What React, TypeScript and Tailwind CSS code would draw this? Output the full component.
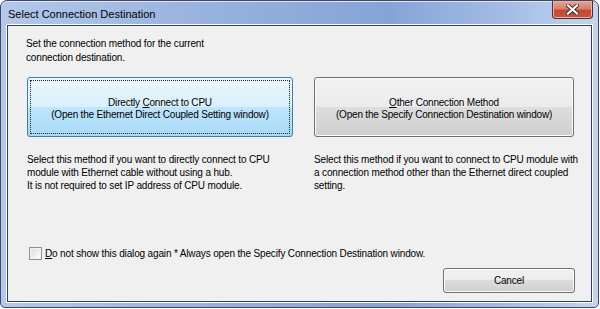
import React, { useState } from "react";

const font = "font-['Segoe_UI','Liberation_Sans',Arial,sans-serif]";

const BigButton: React.FC<{
  focused?: boolean;
  pre: string;
  accessKey: string;
  rest: string;
  sub: string;
  width: string;
}> = ({ focused, pre, accessKey, rest, sub, width }) => (
  <button
    type="button"
    className={`${width} h-[60px] rounded-[3px] border p-[2px] text-[10px] leading-[12px] tracking-[-0.2px] text-black ${
      focused
        ? "border-[#3c7fb1] bg-[linear-gradient(180deg,#eaf6fd_0%,#d9f0fc_50%,#bee6fd_50%,#a7d9f5_100%)]"
        : "border-[#707070] bg-[linear-gradient(180deg,#f2f2f2_0%,#ebebeb_50%,#dddddd_50%,#cfcfcf_100%)] shadow-[inset_0_0_0_1px_#fcfcfc]"
    }`}
  >
    <div
      className={`flex h-full w-full flex-col items-center justify-center pt-[3px] ${
        focused ? "border border-dotted border-[#222]" : ""
      }`}
    >
      <span>
        {pre}
        <span className="underline">{accessKey}</span>
        {rest}
      </span>
      <span>{sub}</span>
    </div>
  </button>
);

const App: React.FC = () => {
  const [noShow, setNoShow] = useState(false);

  return (
    <div className={`h-[309px] w-[600px] bg-white ${font}`}>
      <div className="flex h-[308px] w-[599px] flex-col rounded-t-[7px] rounded-b-[5px] border border-[#3b4963] bg-[linear-gradient(90deg,#b3c8ea_0%,#9bb4e0_30%,#86a3d8_65%,#a5bde6_85%,#c3d4ee_100%)] px-[6px] pb-[5px] shadow-[inset_0_1px_0_#dfe8f6]">
        <div className="flex h-[24px] items-start justify-between">
          <span className="pl-[1px] pt-[6px] text-[11px] leading-[14px] text-black">
            Select Connection Destination
          </span>
          <div className="mr-[-1px] flex h-[18px] w-[41px] items-center justify-center rounded-b-[4px] border border-t-0 border-[#5a2a24] bg-[linear-gradient(180deg,#e5a497_0%,#d7806f_45%,#c54a33_55%,#c0533b_100%)] shadow-[inset_0_0_0_1px_#eab3a7]">
            <svg width="13" height="11" viewBox="0 0 13 11">
              <path
                d="M2 1.5 L11 9.5 M11 1.5 L2 9.5"
                stroke="#3a2a2a"
                strokeWidth="4"
                strokeLinecap="square"
              />
              <path
                d="M2 1.5 L11 9.5 M11 1.5 L2 9.5"
                stroke="#ffffff"
                strokeWidth="2.2"
                strokeLinecap="square"
              />
            </svg>
          </div>
        </div>

        <div className="flex flex-1 flex-col border border-[#2f3f62] bg-[#f0f0f0] pl-[18px] pr-[16px] pt-[11px] text-[10px] leading-[13px] tracking-[-0.15px] text-black shadow-[0_0_0_1px_#ffffff]">
          <p className="leading-[14px]">
            Set the connection method for the current
            <br />
            connection destination.
          </p>

          <div className="mt-[12px] grid grid-cols-[266px_260px] gap-x-[21px] pl-[1px]">
            <BigButton
              focused
              width="w-[266px]"
              pre="Directly "
              accessKey="C"
              rest="onnect to CPU"
              sub="(Open the Ethernet Direct Coupled Setting window)"
            />
            <BigButton
              width="w-[260px]"
              pre=""
              accessKey="O"
              rest="ther Connection Method"
              sub="(Open the Specify Connection Destination window)"
            />
            <p className="mt-[16px] whitespace-nowrap">
              Select this method if you want to directly connect to CPU
              <br />
              module with Ethernet cable without using a hub.
              <br />
              It is not required to set IP address of CPU module.
            </p>
            <p className="mt-[16px] whitespace-nowrap">
              Select this method if you want to connect to CPU module with
              <br />a connection method other than the Ethernet direct coupled
              <br />
              setting.
            </p>
          </div>

          <label className="mt-[55px] ml-[3px] flex items-center gap-[3px]">
            <span
              onClick={() => setNoShow(!noShow)}
              className="flex h-[13px] w-[13px] items-center justify-center border border-[#8e8f8f] bg-[linear-gradient(135deg,#dcdcdc,#ffffff)] shadow-[inset_0_0_0_1px_#f4f4f4]"
            >
              {noShow && <span className="text-[10px] leading-none">✓</span>}
            </span>
            <span>
              <span className="underline">D</span>o not show this dialog again * Always open the
              Specify Connection Destination window.
            </span>
          </label>

          <div className="mt-[8px] flex justify-end">
            <button
              type="button"
              className="h-[25px] w-[132px] rounded-[3px] border border-[#707070] bg-[linear-gradient(180deg,#f2f2f2_0%,#ebebeb_50%,#dddddd_50%,#cfcfcf_100%)] text-[10px] text-black shadow-[inset_0_0_0_1px_#fcfcfc]"
            >
              Cancel
            </button>
          </div>
        </div>
      </div>
    </div>
  );
};

export default App;
